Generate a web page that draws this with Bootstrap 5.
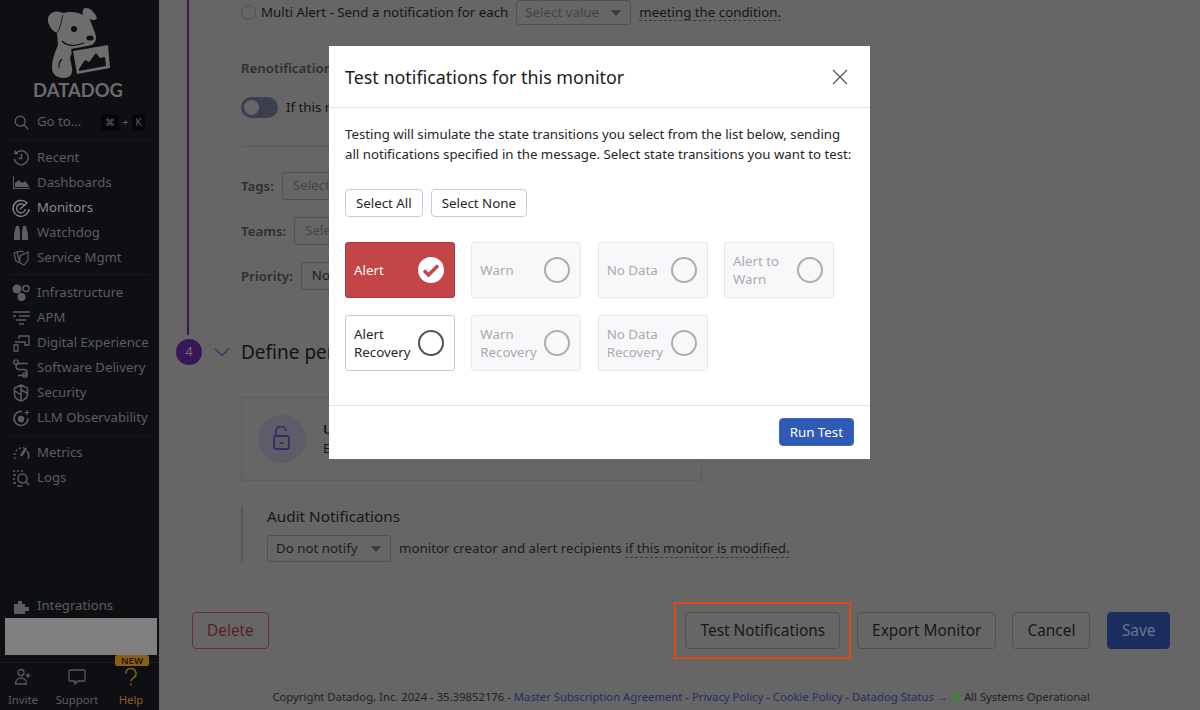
<!doctype html>
<html lang="en">
<head>
<meta charset="utf-8">
<title>Test notifications</title>
<link href="https://cdn.jsdelivr.net/npm/bootstrap@5.3.0/dist/css/bootstrap.min.css" rel="stylesheet">
<style>
html,body{height:710px;overflow:hidden}
body{font-family:"Noto Sans","Open Sans",sans-serif;font-size:13.3px;background:#666;color:#151518}
.shell{height:710px;overflow:hidden}
.side{width:159px;height:710px;background:#0e0f13;color:#5c5d60;flex:none}
.logo-box{height:109px}
.brand-svg{display:block}
.brand-word{font-family:"Lato","Inter",sans-serif;font-weight:700;font-size:18.4px;fill:#6b6b6b}
.goto{height:26px;padding-left:14px;font-size:13.2px}
.kbd-key{background:#060608;border-radius:3px;color:#606165;font-size:10px;line-height:17px;height:17px;text-align:center}
.kbd-wide{width:18px;margin-left:auto}
.kbd-thin{width:13px;margin-right:14px}
.kbd-plus{width:13px;text-align:center;font-size:11px}
.side-rule{height:1px;background:#17181d;margin:0 9px}
.rule-a{margin-top:4px;margin-bottom:5px}
.rule-b{margin-top:4px;margin-bottom:5px}
.rule-c{margin-top:5px;margin-bottom:4px}
.nav-row{height:25px;padding-left:11px;gap:6px;white-space:nowrap;font-size:13.2px}
.nav-last{padding-top:1px}
.nav-row svg{width:20px;height:20px;flex:none}
.nav-row.on{color:#8b8b8d}
.redact{height:37px;margin:0 2px 0 5px;background:#7f7f7f}
.foot-nav{height:48px;border-top:1px solid #1b1c20;margin-top:7px;margin-left:-4px;font-size:11.3px}
.foot-item{width:54px;padding-top:4px;line-height:17px}
.foot-item.help{color:#8a5f14}
.new-tag{left:11px;top:-8px;width:34px;height:11px;background:#8a5f14;color:#1a1408;font-size:9.5px;line-height:11px;font-weight:600;border-radius:2px}
.page{min-width:0}
.stepbody{margin-left:28px;border-left:2px solid #371756;padding-left:52px;height:335px;width:640px}
.lbl{font-weight:600;color:#2e2e32;font-size:13.3px;line-height:20px}
.radio-ring{width:15px;height:15px;border:1.5px solid #4f5058;border-radius:50%;flex:none}
.radio-text{margin-left:5px;margin-right:8px;white-space:nowrap}
.fake-select{height:25px;border:1px solid #505158;border-radius:3px;padding:0 9px 0 8px;color:#44454a;white-space:nowrap;flex:none}
.first-select{width:115px}
.caret-down{width:0;height:0;border:5px solid transparent;border-top:6px solid #3c3d44;border-bottom:0;margin-left:auto}
.dotline{border-bottom:1px dashed #3a3b42;line-height:16px}
.slide{width:37px;height:21px;border-radius:11px;background:#3c3f4f;padding:3px;flex:none}
.slide i{display:block;width:15px;height:15px;border-radius:50%;background:#666}
.hrline{height:1px;background:#5a5a60;width:560px}
.tag-input{height:28px;border:1px solid #505158;border-radius:3px;padding:0 10px;color:#44454a;width:420px;white-space:nowrap}
.priority-input{width:120px;color:#1b1b1f}
.step-dot{width:26px;height:26px;border-radius:50%;background:#371756;color:#77707f;font-size:13px;margin-left:17px;flex:none}
.step-chev{margin:0 11px 0 12px}
.step-title{font-size:19px;line-height:26px;color:#131316;white-space:nowrap}
.lock-box{width:461px;height:84px;margin-left:82px;border:1px solid #5b5b61;border-radius:3px;padding-left:16px}
.lock-disc{width:48px;height:48px;border-radius:50%;background:#5e5c68;flex:none}
.lock-copy{margin-left:17px;line-height:19px;white-space:nowrap}
.audit{margin-left:82px;border-left:2px solid #55555c;padding-left:24px;height:56px;margin-top:25px}
.audit-head{font-size:15.3px;line-height:20px;color:#16161a}
.audit-line{margin-top:9px;color:#1b1b1f;white-space:nowrap}
.audit-select{width:124px;height:27px;color:#1b1b1f;margin-right:8px}
.act{height:37px;font-size:15.4px;border-radius:4px;padding:0 14px;background:transparent;border:1px solid #505158;color:#17171a;white-space:nowrap}
.act-del{color:#5a1e20;border-color:#6e2c2d}
.act-save{background:#1a2f60;border-color:#1a2f60;color:#69758f;padding:0 13.5px}
.act-row{margin:50px 30px 0 33px}
.act-test{margin-right:17px}
.act-export{margin-right:16px}
.act-cancel{margin-right:17px}
.flag{top:-10px;bottom:-10px;left:-11px;right:-11px;border:2px solid #dd4a13;pointer-events:none}
.site-foot{margin-top:33px;height:28px;padding-left:3px;border-top:1px solid #626262;font-size:11.3px;color:#222;line-height:28px;white-space:nowrap}
.site-foot .tie{color:#1f2f63}
.live-dot{display:inline-block;width:8px;height:8px;border-radius:50%;background:#3e803e;margin:0 1px}
.test-modal{width:541px;max-width:541px;margin:46px 0 0 329px}
.test-modal .modal-content{border:0;border-radius:0;height:413px;box-shadow:none}
.test-modal .modal-header{height:62px;padding:0 22px 0 16px;border-color:#e2e3ec;border-radius:0}
.test-modal .modal-title{font-size:17.9px;line-height:26px;color:#1c1c21;font-weight:400}
.x-btn{padding:0;background:none;border:0;line-height:0}
.test-modal .modal-body{padding:16px;color:#25252a;flex:none;height:297px}
.intro{font-size:13.25px;line-height:20px;margin:0 0 25px}
.mini{height:28px;padding:0 10px;font-size:13.3px;line-height:24px;border:1px solid #c8cade;border-radius:4px;background:#fff;color:#25252a}
.trans-grid{display:grid;grid-template-columns:repeat(4,110px);column-gap:16.33px;row-gap:17px;margin-top:25px}
.trans{height:56px;padding:0 10px 0 8px;border:1px solid #e6e7ef;border-radius:3px;background:#f8f8fb;color:#a9aaae;line-height:18px;font-size:13.3px}
.trans.live{background:#fff;border-color:#c6c8de;color:#25252a}
.trans.hot{background:#c34545;border-color:#a83a3a;color:#fff}
.tick{width:26px;height:26px;border-radius:50%;border:2.5px solid #acadb0;flex:none;margin-left:auto}
.trans.live .tick{border-color:#4f525c}
.trans.hot .tick{border:0;background:#fff}
.test-modal .modal-footer{height:54px;padding:12px 16px 0;align-items:flex-start;border-color:#e2e3ec;border-radius:0}
.run-btn{height:28px;padding:0 10px;margin:0;font-size:13.3px;line-height:24px;color:#fff;background:#2f5bb7;border:1px solid #3c69c9;border-radius:4px}
</style>
</head>
<body>
<div class="shell d-flex">
  <aside class="side d-flex flex-column">
    <div class="logo-box">
      <svg class="brand-svg" width="159" height="108" viewBox="0 0 159 108">
        <path fill="#6d6d6d" d="M63 13C58 10 50 11 48 18C47 24 52 31 57 33L58 45C55 52 52 60 52 68C52 75 58 78 64 78C70 78 73 74 72 68L70 58L73 50L92 45C96 42 97 38 95 33C93 27 91 22 89 19C93 21 96 20 97 18C95 13 91 8 86 8C83 8 82 11 83 15C78 12 70 11 63 13Z"/>
        <path fill="#0e0f13" d="M71 49l39-7 2 27-36 7z"/>
        <path fill="#6d6d6d" d="M73 51l35-6 2 23-33 6z"/>
        <path fill="#0e0f13" d="M79 69l6-9 4 2 7-9 4 5 5-1 1 9-27 5z"/>
        <path d="M62 41c5 5 12 6 22 2" stroke="#0e0f13" stroke-width="1.300" fill="none"/>
        <circle cx="74" cy="29" r="3" fill="#0e0f13"/>
        <ellipse cx="90" cy="38" rx="3.600" ry="2.600" fill="#0e0f13"/>
        <path d="M63 15c-2 6-2 12-6 18" stroke="#0e0f13" stroke-width=".8" fill="none"/>
        <path d="M62 59a11 11 0 0 0-3 9" stroke="#0e0f13" stroke-width="1.100" fill="none"/>
        <text class="brand-word" x="78" y="97" text-anchor="middle">DATADOG</text>
      </svg>
    </div>
    <div class="goto d-flex align-items-center">
      <svg width="15" height="15" viewBox="0 0 15 15" fill="none" stroke="#626366" stroke-width="1.200"><circle cx="6.200" cy="6.200" r="5"/><path d="M10 10l4.300 4.300"/></svg>
      <span class="ms-2">Go to...</span>
      <span class="kbd-key kbd-wide">⌘</span><span class="kbd-plus">+</span><span class="kbd-key kbd-thin">K</span>
    </div>
    <div class="side-rule rule-a"></div>
    <div>
      <div class="nav-row d-flex align-items-center"><svg viewBox="0 0 20 20" fill="none" stroke="currentColor" stroke-width="1.500"><path d="M5 5a7 7 0 1 1-1.700 6M4 2.500v3h3"/><path d="M10.500 6v4.500H7.500"/></svg>Recent</div>
      <div class="nav-row d-flex align-items-center"><svg viewBox="0 0 20 20"><path d="M2 3v13h17v-1H3V3z" fill="currentColor"/><path d="M4 14V10l4-3 3 3 3-2 4 5v1z" fill="currentColor"/></svg>Dashboards</div>
      <div class="nav-row on d-flex align-items-center"><svg viewBox="0 0 20 20" fill="none" stroke="currentColor" stroke-width="1.300"><path d="M16 5a8 8 0 1 0 2 6"/><path d="M13.500 7.500a4.500 4.500 0 1 0 1 3.500"/><path d="M9 11l7-6"/></svg>Monitors</div>
      <div class="nav-row d-flex align-items-center"><svg viewBox="0 0 20 20"><path d="M5 3h3l1 6v8H3v-6zM12 3h3l2 8v6h-6V9z" fill="currentColor"/></svg>Watchdog</div>
      <div class="nav-row d-flex align-items-center"><svg viewBox="0 0 20 20" fill="none" stroke="currentColor" stroke-width="1.200"><path d="M9 8l8-4v8l-4 5-4-2zM3 5l6-2 4 1M3 5l2 8 4 2M6 3.500l2 9"/></svg>Service Mgmt</div>
    </div>
    <div class="side-rule rule-b"></div>
    <div>
      <div class="nav-row d-flex align-items-center"><svg viewBox="0 0 20 20"><circle cx="6" cy="6" r="4.500" fill="currentColor"/><circle cx="15" cy="5.500" r="3" fill="none" stroke="currentColor" stroke-width="1.400"/><circle cx="10.500" cy="14" r="4" fill="currentColor"/></svg>Infrastructure</div>
      <div class="nav-row d-flex align-items-center"><svg viewBox="0 0 20 20" stroke="currentColor" stroke-width="1.500"><path d="M2 4h17M2 8h3M8 8h11M5 12h10M8 16h5"/></svg>APM</div>
      <div class="nav-row d-flex align-items-center"><svg viewBox="0 0 20 20" fill="none" stroke="currentColor" stroke-width="1.300"><path d="M8 6V3h10v9h-4M4 9h10v4M3 12h4v6H3z"/></svg>Digital Experience</div>
      <div class="nav-row d-flex align-items-center"><svg viewBox="0 0 20 20" fill="none" stroke="currentColor" stroke-width="1.300"><path d="M17 5.500H8a3 3 0 0 0 0 6h5a3 3 0 0 1 0 6H7"/><circle cx="5" cy="4" r="2.200"/><circle cx="14" cy="17" r="2.200"/></svg>Software Delivery</div>
      <div class="nav-row d-flex align-items-center"><svg viewBox="0 0 20 20" fill="none" stroke="currentColor" stroke-width="1.500"><path d="M10 2l6.500 3v6c0 3.500-3 6-6.500 7-3.500-1-6.500-3.500-6.500-7V5zM10 2v16M4 8l6 4M10 7l6 3"/></svg>Security</div>
      <div class="nav-row d-flex align-items-center"><svg viewBox="0 0 20 20" fill="none" stroke="currentColor" stroke-width="1.600"><path d="M11 3.500a7 7 0 1 0 6 7"/><circle cx="10" cy="11" r="2.400" fill="currentColor"/><path d="M16 2v5M13.500 4.500h5" stroke-width="1.200"/></svg>LLM Observability</div>
    </div>
    <div class="side-rule rule-c"></div>
    <div>
      <div class="nav-row d-flex align-items-center"><svg viewBox="0 0 20 20" fill="none" stroke="currentColor" stroke-width="1.500"><path d="M4 16a8 8 0 0 1 9-11" stroke-dasharray="2 2"/><path d="M16 8a8 8 0 0 1 1 8"/><path d="M10 13l5-8" stroke-width="2.400"/></svg>Metrics</div>
      <div class="nav-row d-flex align-items-center"><svg viewBox="0 0 20 20" fill="none" stroke="currentColor" stroke-width="1.500"><circle cx="11.500" cy="10.500" r="4.500"/><path d="M15 14l3 3M2 3h2M6 3h2M10 3h2M2 7h3M2 11h2M2 15h3M6 18h5"/></svg>Logs</div>
    </div>
    <div class="mt-auto nav-row nav-last d-flex align-items-center"><svg viewBox="0 0 20 20"><path d="M3 8h4V5h4v3h3v3h4v4h-4v3H3z" fill="currentColor"/></svg>Integrations</div>
    <div class="redact"></div>
    <div class="foot-nav d-flex position-relative">
      <div class="foot-item d-flex flex-column align-items-center"><svg width="20" height="20" viewBox="0 0 20 20" fill="none" stroke="#58595c" stroke-width="1.300"><circle cx="8" cy="5.500" r="3"/><path d="M2.500 17c0-8 11-8 11 0zM15 6v5M12.500 8.500h5"/></svg><span class="mt-1">Invite</span></div>
      <div class="foot-item d-flex flex-column align-items-center"><svg width="20" height="20" viewBox="0 0 20 20" fill="none" stroke="#58595c" stroke-width="1.300"><path d="M3 3h14a1 1 0 0 1 1 1v9a1 1 0 0 1-1 1h-6l-3 3v-3H3a1 1 0 0 1-1-1V4a1 1 0 0 1 1-1z"/></svg><span class="mt-1">Support</span></div>
      <div class="foot-item help d-flex flex-column align-items-center position-relative"><svg width="20" height="20" viewBox="0 0 20 20" fill="none" stroke="#8a5f14" stroke-width="1.500"><path d="M5 6.500a5 5 0 1 1 7.500 4.300c-1.800 1-2.500 1.700-2.500 3.500"/><path d="M10 16.500v2"/></svg><span class="mt-1">Help</span><span class="new-tag position-absolute text-center">NEW</span></div>
    </div>
  </aside>

  <main class="page flex-grow-1 d-flex flex-column">
    <div class="stepbody">
      <div class="d-flex align-items-center text-nowrap" style="height:25px">
        <span class="radio-ring"></span>
        <span class="radio-text">Multi Alert - Send a notification for each</span>
        <span class="fake-select first-select d-flex align-items-center">Select value<span class="caret-down"></span></span>
        <span class="dotline ms-2">meeting the condition.</span>
      </div>
      <div class="lbl" style="margin-top:33px">Renotification</div>
      <div class="d-flex align-items-center" style="margin-top:19px;height:21px">
        <span class="slide"><i></i></span>
        <span class="ms-2">If this m</span>
      </div>
      <div class="hrline" style="margin-top:28px"></div>
      <div class="d-flex align-items-center" style="margin-top:25px"><span class="lbl me-2">Tags:</span><span class="tag-input d-flex align-items-center">Select</span></div>
      <div class="d-flex align-items-center" style="margin-top:17px"><span class="lbl me-2">Teams:</span><span class="tag-input d-flex align-items-center">Sele</span></div>
      <div class="d-flex align-items-center" style="margin-top:17px"><span class="lbl me-2">Priority:</span><span class="tag-input priority-input d-flex align-items-center">No</span></div>
    </div>
    <div class="d-flex align-items-center" style="margin-top:4px">
      <span class="step-dot d-flex align-items-center justify-content-center">4</span>
      <svg class="step-chev" width="16" height="10" viewBox="0 0 16 10" fill="none" stroke="#4a3468" stroke-width="1.600"><path d="M1 1.500l7 7 7-7"/></svg>
      <span class="step-title">Define per</span>
    </div>
    <div class="lock-box d-flex align-items-center" style="margin-top:32px">
      <span class="lock-disc d-flex align-items-center justify-content-center">
        <svg width="20" height="26" viewBox="0 0 20 26" fill="none" stroke="#3a2a66" stroke-width="1.800"><path d="M4 10V6a5 5 0 0 1 10-1"/><rect x="2" y="10" width="15" height="13" rx="2"/><path d="M7.500 17h4"/></svg>
      </span>
      <div class="lock-copy"><div class="fw-semibold">U</div><div>E</div></div>
    </div>
    <div class="audit">
      <div class="audit-head">Audit Notifications</div>
      <div class="audit-line d-flex align-items-center">
        <span class="fake-select audit-select d-flex align-items-center">Do not notify<span class="caret-down"></span></span>
        <span>monitor creator and alert recipients <span class="dotline">if this monitor is modified.</span></span>
      </div>
    </div>
    <div class="act-row d-flex">
      <button type="button" class="btn act act-del">Delete</button>
      <span class="position-relative ms-auto act-test"><button type="button" class="btn act">Test Notifications</button><span class="flag position-absolute"></span></span>
      <button type="button" class="btn act act-export">Export Monitor</button>
      <button type="button" class="btn act act-cancel">Cancel</button>
      <button type="button" class="btn act act-save">Save</button>
    </div>
    <footer class="site-foot text-center">Copyright Datadog, Inc. 2024 - 35.39852176 - <span class="tie">Master Subscription Agreement</span> - <span class="tie">Privacy Policy</span> - <span class="tie">Cookie Policy</span> - <span class="tie">Datadog Status →</span> <span class="live-dot"></span> All Systems Operational</footer>
  </main>
</div>

<div class="modal d-block" tabindex="-1" role="dialog" aria-modal="true">
  <div class="modal-dialog test-modal">
    <div class="modal-content">
      <div class="modal-header">
        <h5 class="modal-title">Test notifications for this monitor</h5>
        <button type="button" class="x-btn ms-auto" aria-label="Close"><svg width="16" height="16" viewBox="0 0 16 16" stroke="#55565c" stroke-width="1.200"><path d="M1 1l14 14M15 1L1 15"/></svg></button>
      </div>
      <div class="modal-body">
        <p class="intro">Testing will simulate the state transitions you select from the list below, sending all notifications specified in the message. Select state transitions you want to test:</p>
        <div class="d-flex gap-2"><button type="button" class="btn mini">Select All</button><button type="button" class="btn mini">Select None</button></div>
        <div class="trans-grid">
          <div class="trans hot d-flex align-items-center">Alert<span class="tick d-flex align-items-center justify-content-center"><svg width="18" height="15" viewBox="0 0 18 15" fill="none" stroke="#c34545" stroke-width="3.400"><path d="M2 7.500l4.500 4.500L16 2.500"/></svg></span></div>
          <div class="trans d-flex align-items-center">Warn<span class="tick"></span></div>
          <div class="trans d-flex align-items-center">No Data<span class="tick"></span></div>
          <div class="trans d-flex align-items-center"><span>Alert to<br>Warn</span><span class="tick"></span></div>
          <div class="trans live d-flex align-items-center"><span>Alert<br>Recovery</span><span class="tick"></span></div>
          <div class="trans d-flex align-items-center"><span>Warn<br>Recovery</span><span class="tick"></span></div>
          <div class="trans d-flex align-items-center"><span>No Data<br>Recovery</span><span class="tick"></span></div>
        </div>
      </div>
      <div class="modal-footer">
        <button type="button" class="btn run-btn">Run Test</button>
      </div>
    </div>
  </div>
</div>
<script src="https://cdn.jsdelivr.net/npm/bootstrap@5.3.0/dist/js/bootstrap.bundle.min.js"></script>
</body>
</html>
